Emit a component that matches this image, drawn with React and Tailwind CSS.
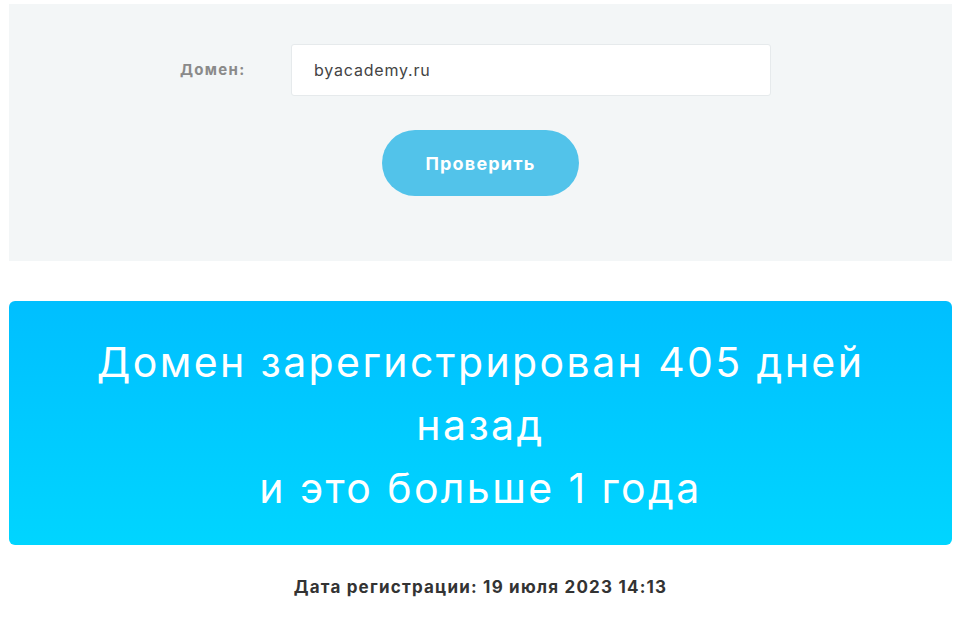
export default function App() {
  return (
    <div className="min-h-screen bg-white">
      <div className="ml-[9px] w-[943px] pt-[4px] font-['Inter','Noto_Sans',sans-serif]">
        {/* form panel */}
        <div className="bg-[#f3f6f7] h-[257px] pt-[40px]">
          <div className="flex items-center">
            <div className="w-[282px] pl-[171px] text-[15px] font-bold tracking-[1.3px] text-[#8a8a8a]">Домен:</div>
            <div className="w-[480px] h-[52px] bg-white border border-[#e6eaec] rounded-[3px] flex items-center pl-[22px] text-[16px] tracking-[0.8px] text-[#444]">
              byacademy.ru
            </div>
          </div>
          <div className="flex justify-center mt-[34px]">
            <button className="w-[197px] h-[66px] rounded-full bg-[#52c3ea] text-white text-[18px] tracking-[1.2px] font-bold">
              Проверить
            </button>
          </div>
        </div>

        {/* result */}
        <div className="mt-[40px] h-[244px] rounded-[6px] bg-gradient-to-b from-[#00bfff] to-[#00d5ff] pt-[30px] text-center text-white text-[41px] tracking-[2.4px] leading-[63px] font-normal">
          <div>Домен зарегистрирован 405 дней</div>
          <div>назад</div>
          <div>и это больше 1 года</div>
        </div>

        <div className="mt-[30px] text-center text-[17px] tracking-[1.2px] font-bold text-[#333]">
          Дата регистрации: 19 июля 2023 14:13
        </div>
      </div>
    </div>
  );
}
